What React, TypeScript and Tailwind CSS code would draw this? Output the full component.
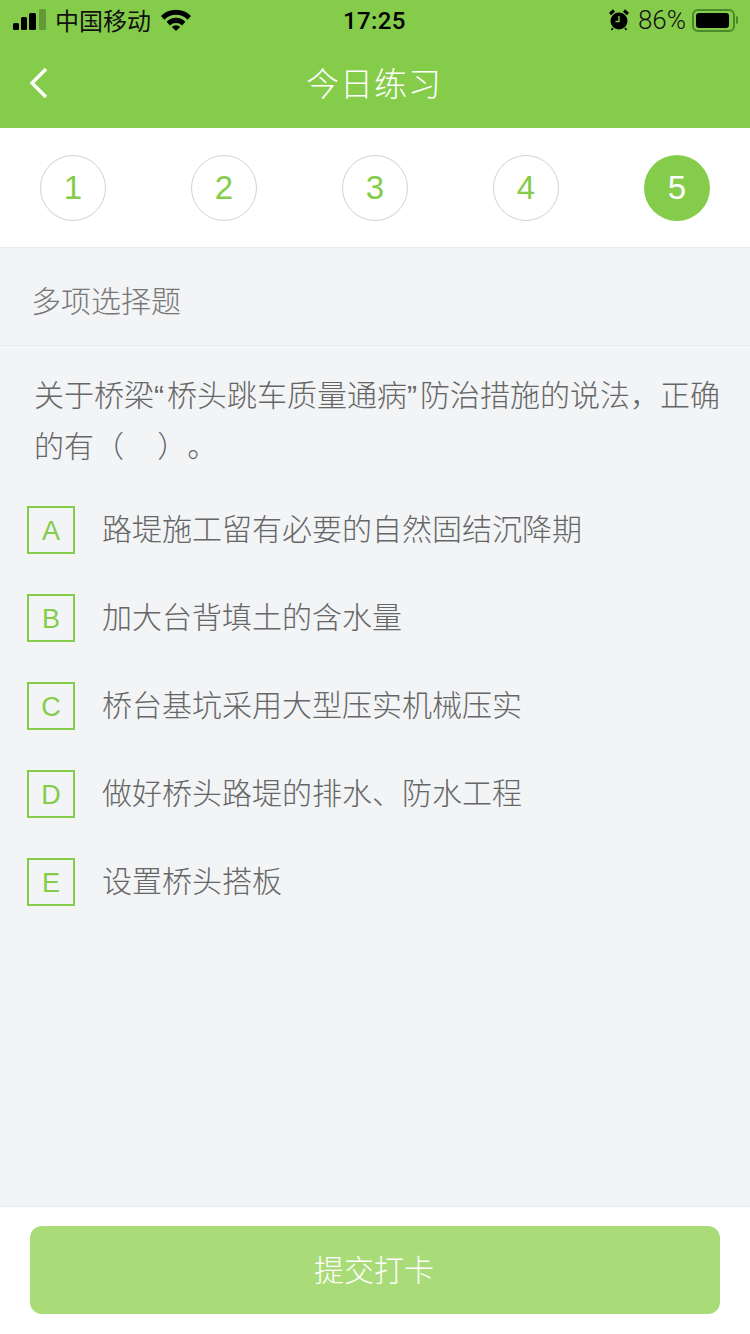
const cjk = { fontFamily: '"Noto Sans CJK SC", "Liberation Sans", sans-serif' };

const steps = [1, 2, 3, 4, 5];
const options = [
  { key: "A", text: "路堤施工留有必要的自然固结沉降期" },
  { key: "B", text: "加大台背填土的含水量" },
  { key: "C", text: "桥台基坑采用大型压实机械压实" },
  { key: "D", text: "做好桥头路堤的排水、防水工程" },
  { key: "E", text: "设置桥头搭板" },
];

function StatusBar() {
  return (
    <div className="h-10 flex items-center justify-between text-black pl-[13px] pr-[12px] relative">
      <div className="flex items-center">
        <svg width="33" height="22" viewBox="0 0 33 22">
          <rect x="0" y="14" width="6" height="7" rx="1.5" fill="#000" />
          <rect x="8" y="8" width="6" height="13" rx="1.5" fill="#000" />
          <rect x="16" y="4" width="7" height="17" rx="1.5" fill="#000" />
          <rect x="26" y="0" width="7" height="21" rx="1.5" fill="#000" opacity="0.25" />
        </svg>
        <span className="text-[24px] leading-none ml-[9px] text-[#111]" style={cjk}>中国移动</span>
        <svg className="ml-[10px]" width="30" height="22" viewBox="0 0 30 22">
          <path d="M0 7 A21 21 0 0 1 30 7 L26.6 10.8 A16 16 0 0 0 3.4 10.8 Z" fill="#000" />
          <path d="M5.6 12.8 A13 13 0 0 1 24.4 12.8 L21 16.4 A8.5 8.5 0 0 0 9 16.4 Z" fill="#000" />
          <path d="M10.8 18 A6 6 0 0 1 19.2 18 L15 22 Z" fill="#000" />
        </svg>
      </div>
      <span className="absolute left-[343px] top-[7px] text-[24px] leading-[28px] font-medium tracking-[0.4px] font-['Roboto',sans-serif]">17:25</span>
      <div className="flex items-center">
        <svg width="20" height="22" viewBox="0 0 20 22">
          <circle cx="10" cy="12" r="8.5" fill="#000" />
          <path d="M10 7 V12.5 H6.5" stroke="#85cc4b" strokeWidth="1.4" fill="none" />
          <path d="M1 5 L5 1.5 M19 5 L15 1.5" stroke="#000" strokeWidth="3" />
          <path d="M4 19 L2.5 21 M16 19 L17.5 21" stroke="#000" strokeWidth="1.5" />
        </svg>
        <span className="text-[26px] leading-none ml-[9px] text-[#111] font-light font-['Roboto',sans-serif]">86%</span>
        <div className="ml-[6px] w-[43px] h-[23px] rounded-[6px] border-2 border-[#4b8a28] p-[2px] flex">
          <div className="w-[33px] bg-black rounded-[3px]" />
        </div>
        <div className="ml-[1px] w-[2px] h-[8px] bg-[#4b8a28] rounded-r-sm" />
      </div>
    </div>
  );
}

export default function App() {
  return (
    <div className="w-[750px] h-[1334px] bg-[#f2f4f6] flex flex-col overflow-hidden" style={cjk}>
      {/* Header */}
      <div className="bg-[#85cc4b] h-[128px] shrink-0">
        <StatusBar />
        <div className="h-[88px] relative flex items-center justify-center pb-[4px]">
          <svg className="absolute left-[29px] top-[27px]" width="20" height="32" viewBox="0 0 20 32">
            <path d="M17 2 L3 16 L17 30" stroke="#fff" strokeWidth="3.4" fill="none" />
          </svg>
          <span className="text-[33px] leading-none text-white tracking-[1px] font-light pr-[2px]">今日练习</span>
        </div>
      </div>

      {/* Steps */}
      <div className="h-[120px] shrink-0 bg-white border-b border-[#e8e9eb] flex items-center justify-between px-[40px]">
        {steps.map((n) => (
          <div
            key={n}
            className={`w-[66px] h-[66px] rounded-full flex items-center justify-center text-[33px] font-['Liberation_Sans',sans-serif] ${
              n === 5 ? "bg-[#85cc4b] text-white" : "border border-[#cfd1d3] text-[#85cc4b]"
            }`}
          >
            {n}
          </div>
        ))}
      </div>

      {/* Question type */}
      <div className="h-[98px] shrink-0 border-b border-[#e8e9eb] flex items-center pl-[31px] pt-[6px] text-[30px] text-[#777] font-light">
        多项选择题
      </div>

      {/* Question */}
      <div className="pl-[34px] pr-[28px] pt-[24px] text-[30px] leading-[51px] text-[#666] font-light [text-spacing-trim:space-all] font-['Liberation_Sans','Noto_Sans_CJK_SC',sans-serif]">
        关于桥梁<span className="mr-[3px]">“</span>桥头跳车质量通病<span className="mr-[3px]">”</span>防治措施的说法，正确
        <br />
        的有（&nbsp;&nbsp;&nbsp;&nbsp;）。
      </div>

      {/* Options */}
      <div className="flex flex-col gap-[40px] mt-[34px] pl-[27px]">
        {options.map((o) => (
          <div key={o.key} className="flex items-center h-[48px]">
            <div className="w-[48px] h-[48px] pt-[2px] border-2 border-[#85cc4b] flex items-center justify-center text-[27px] text-[#85cc4b] font-['Liberation_Sans',sans-serif]">
              {o.key}
            </div>
            <span className="ml-[27px] pb-[6px] text-[30px] leading-none text-[#666] font-light" style={cjk}>{o.text}</span>
          </div>
        ))}
      </div>

      {/* Submit */}
      <div className="mt-auto h-[128px] shrink-0 bg-white border-t border-[#e8e9eb] px-[30px] pt-[19px]">
        <button className="w-full h-[88px] pb-[4px] pr-[2px] rounded-[12px] bg-[#a9dc78] text-white text-[30px] font-light">
          提交打卡
        </button>
      </div>
    </div>
  );
}
